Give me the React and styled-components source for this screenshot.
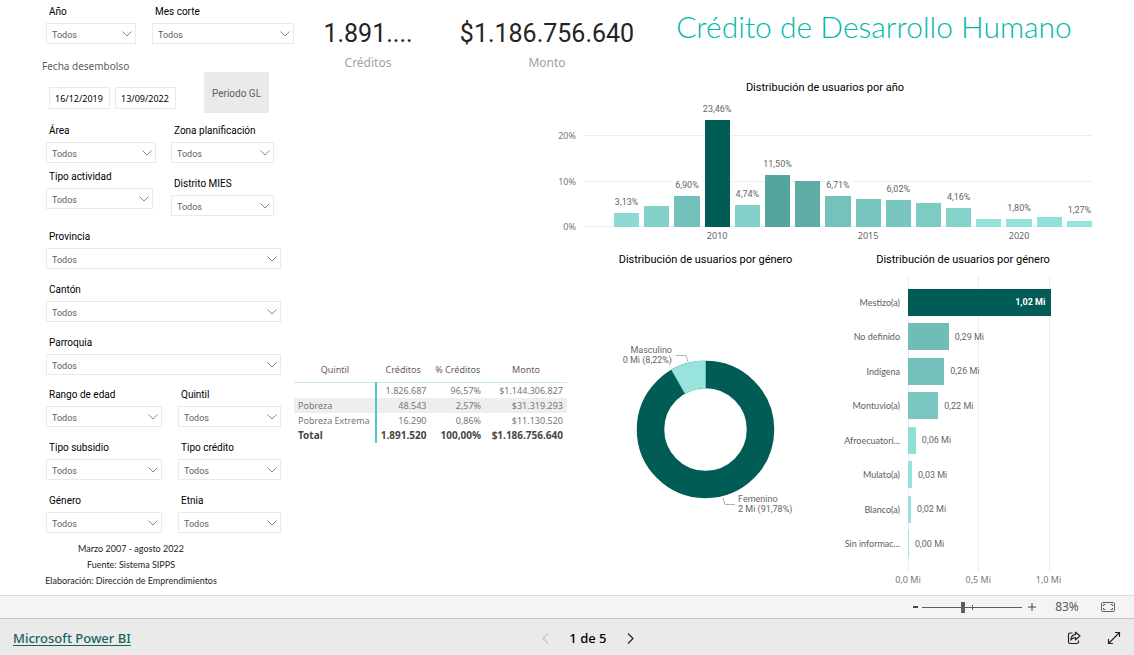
import React, { useId, useState } from "react";
import styled, { createGlobalStyle } from "styled-components";

const UI = '"Noto Sans", "Open Sans", sans-serif';
const DIN = 'Roboto, "Liberation Sans", sans-serif';
const SMALL = 'Lato, "Noto Sans", sans-serif';
const DARK = "#015c55";
const LIGHT = "#99e3dd";

const GlobalStyle = createGlobalStyle`
  * { box-sizing: border-box; }
  body { margin: 0; background: #fff; font-family: ${UI}; color: #000; }
  button, input, select { font-family: inherit; margin: 0; }
`;

const Page = styled.div`
  min-height: 100vh;
  display: flex;
  flex-direction: column;
`;

const Report = styled.main`
  flex: 1;
  display: flex;
`;

const Sidebar = styled.aside`
  flex: none;
  width: 294px;
  padding: 4px 0 0 42px;
  font-family: ${DIN};
`;

const Main = styled.div`
  flex: 1;
  min-width: 0;
  padding-right: 42px;
`;

/* ---------- filters ---------- */

const FilterRow = styled.div`
  display: flex;
  gap: ${(p) => p.$gap || 16}px;
  padding-left: 4px;
`;

const FilterStack = styled.div`
  display: flex;
  flex-direction: column;
  gap: ${(p) => p.$gap || 13}px;
`;

const FilterSection = styled(FilterStack)`
  margin-top: ${(p) => p.$top || 13}px;
`;

const Field = styled.div`
  width: ${(p) => p.$width}px;
`;

const FieldLabel = styled.label`
  display: block;
  padding-left: 3px;
  margin-bottom: 3px;
  font-size: 10px;
  line-height: 16px;
  white-space: nowrap;
`;

const SelectBox = styled.div`
  position: relative;
  height: 21px;
`;

const Select = styled.select`
  appearance: none;
  display: block;
  width: 100%;
  height: 21px;
  padding: 2px 18px 0 5px;
  border: 1px solid #eaeaea;
  border-radius: 0;
  background: #fff;
  color: #605e5c;
  font-size: 9px;
`;

const SelectArrow = styled.svg`
  position: absolute;
  right: 4px;
  top: 8px;
  pointer-events: none;
`;

const DateRow = styled.div`
  display: flex;
  height: 79px;
  padding-top: 14px;
`;

const DateGroup = styled.div`
  width: 162px;
`;

const DateCaption = styled.div`
  font-family: ${UI};
  font-size: 10px;
  line-height: 16px;
  color: #605e5c;
`;

const DateInputs = styled.div`
  display: flex;
  gap: 5px;
  margin-top: 13px;
  padding-left: 7px;
`;

const DateInput = styled.input`
  width: 61px;
  height: 22px;
  padding: 1px 0 0 5px;
  border: 1px solid #eaeaea;
  background: #fff;
  color: #000;
  font-family: ${UI};
  font-size: 9px;
`;

const PeriodButton = styled.button`
  width: 65px;
  height: 41px;
  margin-top: 14px;
  padding: 2px 0 0;
  border: 0;
  background: #eaeaea;
  color: #605e5c;
  font-size: 10px;
  white-space: nowrap;
`;

const Notes = styled.footer`
  width: 178px;
  margin-top: 8px;
  text-align: center;
  font-family: ${SMALL};
  font-size: 9px;
  line-height: 16px;
  color: #252423;
  white-space: nowrap;
`;

/* ---------- header ---------- */

const Header = styled.header`
  display: flex;
  height: 78px;
`;

const Kpi = styled.div`
  flex: none;
  width: ${(p) => p.$width}px;
  padding-top: 18px;
  text-align: center;
`;

const KpiValue = styled.div`
  font-family: ${DIN};
  font-size: 25px;
  line-height: 32px;
  color: #252423;
`;

const KpiLabel = styled.div`
  margin-top: 5px;
  font-size: 12px;
  line-height: 16px;
  color: #a19f9d;
`;

const Title = styled.h1`
  flex: 1;
  margin: 0;
  padding: 6px 0 0 4px;
  text-align: center;
  font-family: ${SMALL};
  font-size: 30px;
  line-height: 40px;
  font-weight: 300;
  color: #01b8aa;
  white-space: nowrap;
`;

/* ---------- charts ---------- */

const ChartTitle = styled.h2`
  margin: 0;
  padding-top: 2px;
  font-family: ${DIN};
  font-size: 11px;
  line-height: ${(p) => p.$line || 20}px;
  font-weight: 400;
  text-align: center;
  white-space: nowrap;
`;

const YearPanel = styled.section`
  height: 170px;
  padding-left: 264px;
`;

const YearGrid = styled.div`
  display: grid;
  grid-template-columns: 18px minmax(0, 1fr);
  column-gap: 8px;
`;

const ScaleRows = styled.div`
  display: grid;
  grid-template-rows: 88fr 100fr 100fr;
  height: 131px;
`;

const ScaleLabel = styled.div`
  display: flex;
  align-items: flex-end;
  justify-content: flex-end;
  margin-bottom: -6px;
  font-size: 9px;
  line-height: 12px;
  color: #777;
`;

const GridLine = styled.div`
  border-bottom: 1px solid #ededed;
`;

const Layers = styled.div`
  display: grid;
  > * { grid-area: 1 / 1; }
`;

const YearBars = styled.div`
  display: flex;
  gap: 5px;
  height: 131px;
  padding-left: 30px;
`;

const YearColumn = styled.div`
  flex: 1 1 0;
  min-width: 0;
  display: flex;
  flex-direction: column;
  justify-content: flex-end;
  align-items: center;
`;

const YearValue = styled.div`
  padding: 0 3px;
  margin-bottom: 5px;
  background: #fff;
  font-family: ${DIN};
  font-size: 9px;
  line-height: 12px;
  color: #666;
`;

const YearBar = styled.div`
  flex: none;
  width: 100%;
`;

const YearTicks = styled.div`
  grid-column: 2;
  display: flex;
  gap: 5px;
  padding-left: 30px;
`;

const YearTick = styled.div`
  flex: 1 1 0;
  min-width: 0;
  display: flex;
  justify-content: center;
  font-size: 9px;
  line-height: 18px;
  color: #666;
`;

const LowerRow = styled.div`
  display: grid;
  grid-template-columns: minmax(0, 273fr) minmax(0, 277fr) minmax(0, 248fr);
`;

const Table = styled.table`
  width: 100%;
  margin-top: 112px;
  border-collapse: collapse;
  table-layout: fixed;
  font-size: 9px;
  line-height: 15px;
  color: #605e5c;
`;

const HeadCell = styled.th`
  width: ${(p) => p.$width}%;
  height: 22px;
  padding: 0 0 2px;
  border-bottom: 1px solid #c9ece9;
  font-weight: 400;
  text-align: center;
  white-space: nowrap;
`;

const Row = styled.tr`
  background: ${(p) => (p.$shaded ? "#eeeeee" : "transparent")};
  font-weight: ${(p) => (p.$total ? 700 : 400)};
  font-size: ${(p) => (p.$total ? 10 : 9)}px;
  color: ${(p) => (p.$total ? "#484644" : "#777")};
`;

const NameCell = styled.th`
  height: 15px;
  padding: 0 0 0 4px;
  border-right: 2px solid #4dc9c0;
  font-weight: inherit;
  text-align: left;
  white-space: nowrap;
`;

const NumberCell = styled.td`
  padding: 0 4px 0 0;
  text-align: right;
`;

const DonutPanel = styled.section`
  display: flex;
  flex-direction: column;
  align-items: center;
`;

const DonutChart = styled.svg`
  margin-top: 10px;
  font-family: ${DIN};
  font-size: 9px;
  fill: #666;
`;

const EthnicPanel = styled.section`
  padding-right: 10px;
`;

const EthnicGrid = styled.div`
  display: grid;
  grid-template-columns: 56px minmax(0, 1fr);
  column-gap: 8px;
  margin: 6px 18px 0 0;
`;

const EthnicRows = styled.div`
  display: grid;
  grid-template-columns: minmax(0, 1fr);
  grid-template-rows: repeat(8, 1fr);
  height: 296px;
  padding: 9px 0 11px;
`;

const EthnicName = styled.div`
  display: flex;
  align-items: center;
  justify-content: flex-end;
  font-family: ${SMALL};
  font-size: 9px;
  color: #605e5c;
  white-space: nowrap;
`;

const EthnicItem = styled.div`
  display: flex;
  align-items: center;
  gap: 6px;
  font-family: ${DIN};
  font-size: 9px;
  color: #666;
  white-space: nowrap;
`;

const EthnicBar = styled.div`
  flex: none;
  display: flex;
  align-items: center;
  justify-content: flex-end;
  height: 27px;
  padding-right: ${(p) => (p.$filled ? 6 : 0)}px;
  color: #fff;
  font-weight: 700;
`;

const EthnicColumns = styled.div`
  display: grid;
  grid-template-columns: 50fr 50fr 11fr;
`;

const EthnicLine = styled.div`
  border-left: 1px solid #ededed;
`;

const EthnicScale = styled(EthnicColumns)`
  grid-column: 2;
`;

const EthnicTick = styled.div`
  display: flex;
  justify-content: center;
  width: 0;
  font-size: 9px;
  line-height: 16px;
  color: #777;
  white-space: nowrap;
`;

/* ---------- bottom bars ---------- */

const ZoomBar = styled.div`
  display: flex;
  align-items: center;
  justify-content: flex-end;
  height: 23px;
  padding-right: 17px;
  border-top: 1px solid #dcdcdc;
  background: #f4f4f4;
  color: #605e5c;
`;

const PlainButton = styled.button`
  display: flex;
  align-items: center;
  justify-content: center;
  width: ${(p) => p.$width || 14}px;
  height: 20px;
  padding: 0;
  border: 0;
  background: none;
  color: ${(p) => p.$color || "#252423"};
  font-size: 14px;
  line-height: 20px;
`;

const SliderBox = styled.div`
  position: relative;
  display: flex;
  align-items: center;
  width: 100px;
  height: 20px;
  &::after {
    content: "";
    position: absolute;
    left: 50px;
    top: 8px;
    width: 1px;
    height: 5px;
    background: #605e5c;
  }
`;

const Slider = styled.input`
  appearance: none;
  width: 100%;
  height: 11px;
  background: linear-gradient(#605e5c, #605e5c) center / 100% 1px no-repeat;
  &::-webkit-slider-thumb {
    appearance: none;
    width: 4px;
    height: 11px;
    background: #605e5c;
  }
`;

const ZoomValue = styled.output`
  width: 57px;
  padding-right: 7px;
  text-align: center;
  font-size: 12px;
  line-height: 20px;
`;

const EmbedBar = styled.footer`
  display: flex;
  align-items: center;
  justify-content: space-between;
  height: 37px;
  padding: 2px 13px 0;
  border-top: 1px solid #c8c6c4;
  background: #eaeaea;
`;

const BrandLink = styled.a`
  color: #17645e;
  font-size: 13px;
  font-weight: 500;
  line-height: 20px;
  text-decoration: underline;
  text-underline-offset: 2px;
  white-space: nowrap;
`;

const Pager = styled.nav`
  display: flex;
  align-items: center;
  justify-content: space-between;
  width: 99px;
  font-size: 13px;
  font-weight: 500;
`;

const Actions = styled.div`
  display: flex;
  justify-content: flex-end;
  gap: 26px;
  width: 76px;
`;

/* ---------- data ---------- */

const years = [
  { year: 2007, value: 3.13, label: "3,13%", color: "#8cdad3" },
  { year: 2008, value: 4.6, color: "#84d1ca" },
  { year: 2009, value: 6.9, label: "6,90%", color: "#73c1ba" },
  { year: 2010, value: 23.46, label: "23,46%", color: DARK },
  { year: 2011, value: 4.74, label: "4,74%", color: "#83d0c9" },
  { year: 2012, value: 11.5, label: "11,50%", color: "#54a59d" },
  { year: 2013, value: 10.2, color: "#5dada5" },
  { year: 2014, value: 6.71, label: "6,71%", color: "#74c2bb" },
  { year: 2015, value: 6.25, color: "#77c5be" },
  { year: 2016, value: 6.02, label: "6,02%", color: "#78c6bf" },
  { year: 2017, value: 5.3, color: "#7ecbc4" },
  { year: 2018, value: 4.16, label: "4,16%", color: "#85d2cb" },
  { year: 2019, value: 1.85, color: "#94e1da" },
  { year: 2020, value: 1.8, label: "1,80%", color: "#94e1da" },
  { year: 2021, value: 2.15, color: "#93dfd9" },
  { year: 2022, value: 1.27, label: "1,27%", color: LIGHT },
];
const YEAR_MAX = 28.8;

const groups = [
  { name: "Mestizo(a)", value: 1.02, label: "1,02 Mi", color: DARK, inside: true },
  { name: "No definido", value: 0.29, label: "0,29 Mi", color: "#6fbdb6" },
  { name: "Indígena", value: 0.258, label: "0,26 Mi", color: "#73c1ba" },
  { name: "Montuvio(a)", value: 0.215, label: "0,22 Mi", color: "#79c7c0" },
  { name: "Afroecuatori...", value: 0.056, label: "0,06 Mi", color: "#92dfd8" },
  { name: "Mulato(a)", value: 0.029, label: "0,03 Mi", color: "#96e1db" },
  { name: "Blanco(a)", value: 0.021, label: "0,02 Mi", color: "#97e2dc" },
  { name: "Sin informac...", value: 0.007, label: "0,00 Mi", color: LIGHT },
];
const GROUP_MAX = 1.11;

const quintiles = [
  { name: "", cells: ["1.826.687", "96,57%", "$1.144.306.827"] },
  { name: "Pobreza", cells: ["48.543", "2,57%", "$31.319.293"], shaded: true },
  { name: "Pobreza Extrema", cells: ["16.290", "0,86%", "$11.130.520"] },
  { name: "Total", cells: ["1.891.520", "100,00%", "$1.186.756.640"], total: true },
];

/* ---------- parts ---------- */

function Filter({ label, width }) {
  const id = useId();
  return (
    <Field $width={width}>
      <FieldLabel htmlFor={id}>{label}</FieldLabel>
      <SelectBox>
        <Select id={id}>
          <option>Todos</option>
        </Select>
        <SelectArrow width="10" height="6" viewBox="0 0 10 6" fill="none" stroke="#8a8886">
          <path d="M0.5 0.5 5 5 9.5 0.5" />
        </SelectArrow>
      </SelectBox>
    </Field>
  );
}

function Filters() {
  return (
    <Sidebar>
      <FilterRow>
        <Filter label="Año" width={90} />
        <Filter label="Mes corte" width={142} />
      </FilterRow>
      <DateRow>
        <DateGroup role="group" aria-labelledby="fecha">
          <DateCaption id="fecha">Fecha desembolso</DateCaption>
          <DateInputs>
            <DateInput aria-label="Desde" defaultValue="16/12/2019" />
            <DateInput aria-label="Hasta" defaultValue="13/09/2022" />
          </DateInputs>
        </DateGroup>
        <PeriodButton type="button">Periodo GL</PeriodButton>
      </DateRow>
      <FilterRow $gap={15}>
        <FilterStack $gap={6}>
          <Filter label="Área" width={110} />
          <Filter label="Tipo actividad" width={107} />
        </FilterStack>
        <FilterStack>
          <Filter label="Zona planificación" width={103} />
          <Filter label="Distrito MIES" width={103} />
        </FilterStack>
      </FilterRow>
      <FilterSection>
        {["Provincia", "Cantón", "Parroquia"].map((label) => (
          <FilterRow key={label}>
            <Filter label={label} width={235} />
          </FilterRow>
        ))}
      </FilterSection>
      <FilterSection $top={12}>
        {[
          ["Rango de edad", "Quintil"],
          ["Tipo subsidio", "Tipo crédito"],
          ["Género", "Etnia"],
        ].map(([left, right]) => (
          <FilterRow key={left}>
            <Filter label={left} width={116} />
            <Filter label={right} width={103} />
          </FilterRow>
        ))}
      </FilterSection>
      <Notes>
        <div>Marzo 2007 - agosto 2022</div>
        <div>Fuente: Sistema SIPPS</div>
        <div>Elaboración: Dirección de Emprendimientos</div>
      </Notes>
    </Sidebar>
  );
}

function YearChart() {
  return (
    <YearPanel>
      <ChartTitle $line={16}>Distribución de usuarios por año</ChartTitle>
      <YearGrid>
        <ScaleRows>
          <ScaleLabel>20%</ScaleLabel>
          <ScaleLabel>10%</ScaleLabel>
          <ScaleLabel>0%</ScaleLabel>
        </ScaleRows>
        <Layers>
          <ScaleRows>
            <GridLine />
            <GridLine />
            <GridLine />
          </ScaleRows>
          <YearBars>
            {years.map((y) => (
              <YearColumn key={y.year}>
                {y.label && <YearValue>{y.label}</YearValue>}
                <YearBar
                  style={{ height: `${(y.value / YEAR_MAX) * 100}%`, background: y.color }}
                />
              </YearColumn>
            ))}
          </YearBars>
        </Layers>
        <YearTicks>
          {years.map((y) => (
            <YearTick key={y.year}>{y.year % 5 === 0 ? y.year : ""}</YearTick>
          ))}
        </YearTicks>
      </YearGrid>
    </YearPanel>
  );
}

function QuintileTable() {
  return (
    <div>
      <Table>
        <thead>
          <tr>
            <HeadCell $width={30}>Quintil</HeadCell>
            <HeadCell $width={20}>Créditos</HeadCell>
            <HeadCell $width={20}>% Créditos</HeadCell>
            <HeadCell $width={30}>Monto</HeadCell>
          </tr>
        </thead>
        <tbody>
          {quintiles.map((q) => (
            <Row key={q.name} $shaded={q.shaded} $total={q.total}>
              <NameCell scope="row">{q.name}</NameCell>
              {q.cells.map((c) => (
                <NumberCell key={c}>{c}</NumberCell>
              ))}
            </Row>
          ))}
        </tbody>
      </Table>
    </div>
  );
}

function GenderChart() {
  return (
    <DonutPanel>
      <ChartTitle>Distribución de usuarios por género</ChartTitle>
      <DonutChart width="277" height="260" viewBox="0 0 277 260">
        <circle cx="138.5" cy="149.5" r="55" fill="none" stroke={DARK} strokeWidth="27.5" />
        <path
          d="M138.5 80.75 A68.75 68.75 0 0 0 104.54 89.72 L118.12 113.63 A41.25 41.25 0 0 1 138.5 108.25 Z"
          fill={LIGHT}
          stroke={LIGHT}
          strokeWidth="0.5"
        />
        <g fill="none" stroke="#b3b0ad">
          <path d="M109 75.5 H119 L121 82" />
          <path d="M156 218 L158 224.5 H168" />
        </g>
        <text x="105" y="73" textAnchor="end">Masculino</text>
        <text x="105" y="83" textAnchor="end">0 Mi (8,22%)</text>
        <text x="171" y="222">Femenino</text>
        <text x="171" y="232">2 Mi (91,78%)</text>
      </DonutChart>
    </DonutPanel>
  );
}

function EthnicChart() {
  return (
    <EthnicPanel>
      <ChartTitle>Distribución de usuarios por género</ChartTitle>
      <EthnicGrid>
        <EthnicRows>
          {groups.map((g) => (
            <EthnicName key={g.name}>{g.name}</EthnicName>
          ))}
        </EthnicRows>
        <Layers>
          <EthnicColumns>
            <EthnicLine />
            <EthnicLine />
            <EthnicLine />
          </EthnicColumns>
          <EthnicRows>
            {groups.map((g) => (
              <EthnicItem key={g.name}>
                <EthnicBar
                  $filled={g.inside}
                  style={{ width: `${(g.value / GROUP_MAX) * 100}%`, background: g.color }}
                >
                  {g.inside && g.label}
                </EthnicBar>
                {!g.inside && <span>{g.label}</span>}
              </EthnicItem>
            ))}
          </EthnicRows>
        </Layers>
        <EthnicScale>
          <EthnicTick>0,0 Mi</EthnicTick>
          <EthnicTick>0,5 Mi</EthnicTick>
          <EthnicTick>1,0 Mi</EthnicTick>
        </EthnicScale>
      </EthnicGrid>
    </EthnicPanel>
  );
}

function Zoom() {
  const [zoom, setZoom] = useState(41);
  return (
    <ZoomBar>
      <PlainButton type="button" aria-label="Alejar" $color="#484644">
        <svg width="5" height="2"><rect width="5" height="2" fill="currentColor" /></svg>
      </PlainButton>
      <SliderBox>
        <Slider
          type="range"
          aria-label="Zoom"
          value={zoom}
          onChange={(e) => setZoom(Number(e.target.value))}
        />
      </SliderBox>
      <PlainButton type="button" aria-label="Acercar" $width={20} $color="#484644">
        <svg width="8" height="8" viewBox="0 0 8 8" stroke="currentColor">
          <path d="M0 4H8M4 0V8" />
        </svg>
      </PlainButton>
      <ZoomValue>83%</ZoomValue>
      <PlainButton type="button" aria-label="Ajustar a la página" $width={18} $color="#605e5c">
        <svg width="14" height="10" viewBox="0 0 14 10" fill="none" stroke="currentColor">
          <rect x="0.5" y="0.5" width="13" height="9" rx="1" />
          <path d="M4.5 2.5H2.5V4M2.5 6V7.5H4.5M9.5 2.5H11.5V4M11.5 6V7.5H9.5" />
        </svg>
      </PlainButton>
    </ZoomBar>
  );
}

function Embed() {
  return (
    <EmbedBar>
      <BrandLink href="#">Microsoft Power BI</BrandLink>
      <Pager aria-label="Páginas">
        <PlainButton type="button" aria-label="Página anterior" $color="#c8c6c4">
          <svg width="7" height="11" viewBox="0 0 7 11" fill="none" stroke="currentColor" strokeWidth="1.2">
            <path d="M6 0.5 1 5.5 6 10.5" />
          </svg>
        </PlainButton>
        <span>1 de 5</span>
        <PlainButton type="button" aria-label="Página siguiente">
          <svg width="7" height="11" viewBox="0 0 7 11" fill="none" stroke="currentColor" strokeWidth="1.2">
            <path d="M1 0.5 6 5.5 1 10.5" />
          </svg>
        </PlainButton>
      </Pager>
      <Actions>
        <PlainButton type="button" aria-label="Compartir">
          <svg width="14" height="14" viewBox="0 0 14 14" fill="none" stroke="currentColor" strokeWidth="1.2" strokeLinejoin="round">
            <path d="M5.5 2H3Q1.5 2 1.5 3.5V11Q1.5 12.5 3 12.5H10Q11.5 12.5 11.5 11V9.5" />
            <path d="M8.5 1.2 13 5 8.5 8.8V6.6Q5.5 6.5 3.8 9Q4.2 4 8.5 3.4Z" />
          </svg>
        </PlainButton>
        <PlainButton type="button" aria-label="Pantalla completa">
          <svg width="14" height="14" viewBox="0 0 14 14" fill="none" stroke="currentColor" strokeWidth="1.2">
            <path d="M1.5 12.5 12.5 1.5M8 1.5H12.5V6M1.5 8V12.5H6" />
          </svg>
        </PlainButton>
      </Actions>
    </EmbedBar>
  );
}

export default function App() {
  return (
    <Page>
      <GlobalStyle />
      <Report>
        <Filters />
        <Main>
          <Header>
            <Kpi $width={148}>
              <KpiValue>1.891....</KpiValue>
              <KpiLabel>Créditos</KpiLabel>
            </Kpi>
            <Kpi $width={210}>
              <KpiValue>$1.186.756.640</KpiValue>
              <KpiLabel>Monto</KpiLabel>
            </Kpi>
            <Title>Crédito de Desarrollo Humano</Title>
          </Header>
          <YearChart />
          <LowerRow>
            <QuintileTable />
            <GenderChart />
            <EthnicChart />
          </LowerRow>
        </Main>
      </Report>
      <Zoom />
      <Embed />
    </Page>
  );
}
